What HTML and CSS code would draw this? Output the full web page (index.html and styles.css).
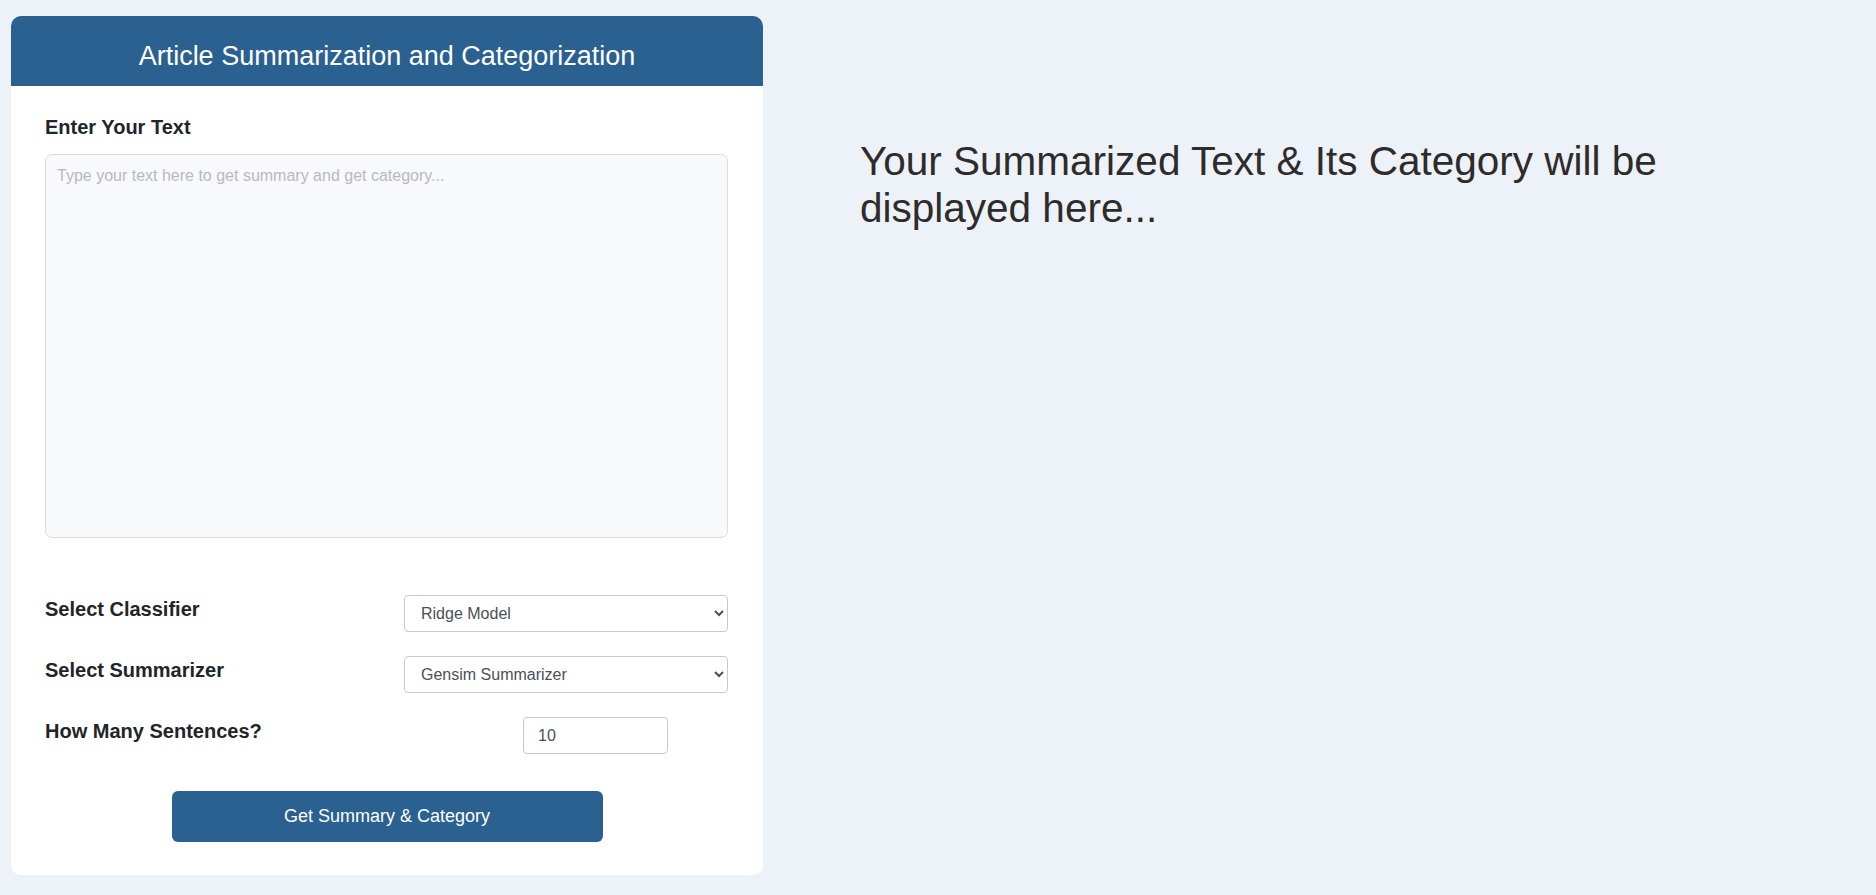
FILE: index.html
```html
<!DOCTYPE html>
<html>
<head>
<meta charset="utf-8">
<link rel="stylesheet" href="styles.css">
</head>
<body>
<div class="page">
  <div class="card">
    <div class="card-header">Article Summarization and Categorization</div>
    <div class="card-body">
      <label class="label">Enter Your Text</label>
      <textarea class="textarea" placeholder="Type your text here to get summary and get category..."></textarea>
      <div class="row">
        <span class="label">Select Classifier</span>
        <select class="select"><option>Ridge Model</option></select>
      </div>
      <div class="row">
        <span class="label">Select Summarizer</span>
        <select class="select"><option>Gensim Summarizer</option></select>
      </div>
      <div class="row row-num">
        <span class="label">How Many Sentences?</span>
        <input class="num" type="text" value="10">
      </div>
      <div class="btn-wrap"><button class="btn">Get Summary &amp; Category</button></div>
    </div>
  </div>
  <div class="result">Your Summarized Text &amp; Its Category will be displayed here...</div>
</div>
</body>
</html>
```
FILE: styles.css
```css
html, body { margin: 0; padding: 0; }
body {
  background: #edf1f8;
  font-family: "Liberation Sans", Arial, sans-serif;
  color: #212529;
}
.page {
  display: flex;
  align-items: flex-start;
  padding: 16px 0 0 11px;
}
.card {
  width: 752px;
  background: #fff;
  border-radius: 10px;
  overflow: hidden;
  flex: none;
}
.card-header {
  background: #2a6190;
  color: #fff;
  height: 70px;
  box-sizing: border-box;
  padding-top: 10px;
  display: flex;
  align-items: center;
  justify-content: center;
  font-size: 27px;
}
.card-body {
  padding: 30px 34px 33px 34px;
  display: flex;
  flex-direction: column;
}
.label {
  font-size: 20px;
  line-height: 23px;
  font-weight: bold;
  color: #212529;
  display: block;
}
.textarea {
  margin-top: 15px;
  height: 384px;
  box-sizing: border-box;
  width: 683px;
  background: #f8f9fb;
  border: 1px solid #dcdde0;
  border-radius: 7px;
  padding: 12px 11px;
  font-family: "Liberation Sans", Arial, sans-serif;
  font-size: 16px;
  resize: none;
  outline: none;
}
.textarea::placeholder { color: #b8b8c4; }
.row {
  display: flex;
  justify-content: space-between;
  align-items: flex-start;
  width: 683px;
}
.textarea + .row { margin-top: 57px; }
.row + .row { margin-top: 24px; }
.row .label { padding-top: 3px; }
.select {
  width: 324px;
  height: 37px;
  box-sizing: border-box;
  border: 1px solid #c9c9c9;
  border-radius: 4px;
  background: #fff;
  padding: 0 12px;
  font-family: "Liberation Sans", Arial, sans-serif;
  font-size: 16px;
  color: #495057;
}
.num {
  width: 145px;
  height: 37px;
  box-sizing: border-box;
  margin-right: 60px;
  border: 1px solid #c9c9c9;
  border-radius: 4px;
  padding: 0 14px;
  font-family: "Liberation Sans", Arial, sans-serif;
  font-size: 16px;
  color: #495057;
  outline: none;
}
.btn-wrap {
  display: flex;
  justify-content: center;
  width: 683px;
  margin-top: 37px;
}
.btn {
  width: 431px;
  height: 51px;
  margin-left: 1px;
  background: #2a6190;
  color: #fff;
  border: none;
  border-radius: 6px;
  font-family: "Liberation Sans", Arial, sans-serif;
  font-size: 18px;
}
.result {
  margin-left: 97px;
  margin-top: 122px;
  width: 840px;
  font-size: 40.5px;
  line-height: 47px;
  color: #2e2b2b;
}
```
